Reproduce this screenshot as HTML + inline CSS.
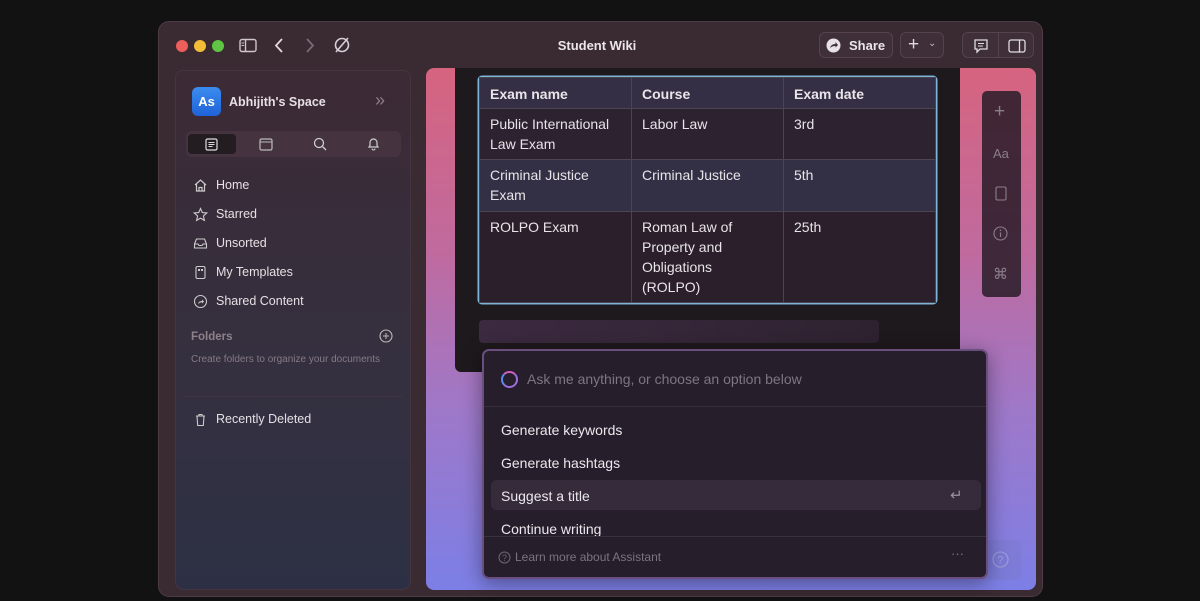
<!DOCTYPE html>
<html><head><meta charset="utf-8"><style>
*{box-sizing:border-box;margin:0;padding:0}
body{width:1200px;height:601px;background:#121212;font-family:"Liberation Sans",sans-serif;position:relative;overflow:hidden;color:#e8e2e6}
.win{position:absolute;left:158px;top:21px;width:885px;height:576px;border-radius:11px;background:#3a2a32;border:1px solid #4d3b45}
.abs{position:absolute}
.dot{position:absolute;top:18px;width:12px;height:12px;border-radius:50%}
.side{position:absolute;left:175px;top:70px;width:236px;height:520px;border-radius:8px;background:linear-gradient(180deg,#3c2a35 0%,#343040 60%,#2d3045 100%);border:1px solid #45353f}
.nav{position:absolute;left:193px;font-size:12.5px;color:#e6e0e4}
.nav span{position:absolute;left:23px;top:0;white-space:nowrap}
.content{position:absolute;left:426px;top:68px;width:610px;height:522px;border-radius:8px;background:linear-gradient(180deg,#d6647f 0%,#c06a9e 35%,#9f78c8 65%,#7c7fe6 100%)}
.doc{position:absolute;left:455px;top:68px;width:505px;height:304px;background:#1e191d;border-radius:0 0 6px 6px}
table{position:absolute;left:479px;top:77px;width:457px;border-collapse:collapse;font-size:14px;color:#e8e4e8;box-shadow:0 0 0 1.5px #7eb4d6;border-radius:3px}
td{border:1px solid #4a4550;vertical-align:top;padding:6px 10px 0 10px;line-height:20px;width:152px}
tr.h td{font-weight:bold;height:31px;background:#352f45;padding-top:6px}
tr.a td{background:#2c2230;height:51px;padding-top:5px}
tr.b td{background:#333046;height:52px;padding-top:5px}
tr.c td{background:#2a1f2b;height:91px;padding-top:5px}
.pop{position:absolute;left:482px;top:349px;width:506px;height:230px;border-radius:7px;background:#261e2a;border:2px solid #6a4e80;box-shadow:0 4px 20px rgba(0,0,0,.4)}
.opt{position:absolute;left:17px;font-size:14px;color:#ece8ee}
.btn{position:absolute;border:1px solid #54434d;border-radius:6px;background:#3f2f39}
</style></head><body>
<div class="win">
<div class="dot" style="left:17px;background:#ed5f5a"></div>
<div class="dot" style="left:35px;background:#f4bd38"></div>
<div class="dot" style="left:53px;background:#5fc443"></div>
<svg class="abs" style="left:80px;top:16px" width="18" height="15" viewBox="0 0 18 15"><rect x="1" y="1.5" width="16" height="12" rx="2" fill="none" stroke="#cfc6cc" stroke-width="1.4"/><line x1="6.5" y1="1.5" x2="6.5" y2="13.5" stroke="#cfc6cc" stroke-width="1.4"/><line x1="2.5" y1="5" x2="5" y2="5" stroke="#cfc6cc"/><line x1="2.5" y1="7.5" x2="5" y2="7.5" stroke="#cfc6cc"/></svg>
<svg class="abs" style="left:115px;top:16px" width="10" height="15"><path d="M8 1L2 7.5L8 14" fill="none" stroke="#e0d8de" stroke-width="1.8"/></svg>
<svg class="abs" style="left:146px;top:16px" width="10" height="15"><path d="M2 1L8 7.5L2 14" fill="none" stroke="#7a6c74" stroke-width="1.8"/></svg>
<svg class="abs" style="left:174px;top:14px" width="18" height="18"><circle cx="9" cy="9" r="6.5" fill="none" stroke="#d8d0d6" stroke-width="1.6"/><line x1="3" y1="16" x2="15" y2="2" stroke="#d8d0d6" stroke-width="1.6"/></svg>
<div class="abs" style="left:0;width:876px;top:16px;text-align:center;font-weight:bold;font-size:13px;color:#ece6ea">Student Wiki</div>
<div class="btn" style="left:660px;top:10px;width:74px;height:26px"><svg class="abs" style="left:6px;top:5px" width="15" height="15"><circle cx="7.5" cy="7.5" r="7" fill="#e8e2e6"/><path d="M4 10Q5 6 9.5 6L9.5 4L12 7L9.5 9.5L9.5 8Q6 8 4 10Z" fill="#3f2f39"/></svg><span class="abs" style="left:29px;top:5px;font-size:13px;font-weight:bold;color:#ece6ea">Share</span></div>
<div class="btn" style="left:741px;top:10px;width:44px;height:26px"><span class="abs" style="left:7px;top:1px;font-size:19px;color:#e0d8de">+</span><span class="abs" style="left:27px;top:5px;font-size:10px;color:#bbb">⌄</span></div>
<div class="btn" style="left:803px;top:10px;width:72px;height:26px"><div class="abs" style="left:35px;top:0;width:1px;height:24px;background:#54434d"></div>
<svg class="abs" style="left:10px;top:5px" width="16" height="16"><path d="M2 2H14V11H7L4 14V11H2Z" fill="none" stroke="#ddd" stroke-width="1.3"/><line x1="5" y1="5.5" x2="11" y2="5.5" stroke="#ddd"/><line x1="5" y1="8" x2="10" y2="8" stroke="#ddd"/></svg>
<svg class="abs" style="left:45px;top:6px" width="18" height="14"><rect x="1" y="1" width="16" height="12" rx="2" fill="none" stroke="#ddd" stroke-width="1.3"/><line x1="11.5" y1="1" x2="11.5" y2="13" stroke="#ddd" stroke-width="1.3"/></svg></div>
</div>

<div class="side"></div>
<div class="abs" style="left:192px;top:87px;width:29px;height:29px;border-radius:6px;background:linear-gradient(#3b8cf0,#1f63d8);color:#fff;font-weight:bold;font-size:13px;text-align:center;line-height:29px">As</div>
<div class="abs" style="left:229px;top:95px;font-size:12.5px;font-weight:bold;color:#e6e0e4">Abhijith's Space</div>
<div class="abs" style="left:375px;top:90px;font-size:18px;color:#8a7d86">»</div>
<div class="abs" style="left:186px;top:131px;width:215px;height:26px;border-radius:6px;background:#45343f"></div>
<div class="abs" style="left:188px;top:134px;width:48px;height:20px;border-radius:4px;background:#231c21"></div>
<svg class="abs" style="left:205px;top:138px" width="13" height="13"><rect x="1" y="1" width="11" height="11" rx="1.5" fill="none" stroke="#ddd" stroke-width="1.2"/><line x1="3.5" y1="4.5" x2="9.5" y2="4.5" stroke="#ddd"/><line x1="3.5" y1="6.5" x2="9.5" y2="6.5" stroke="#ddd"/><line x1="3.5" y1="8.5" x2="7.5" y2="8.5" stroke="#ddd"/></svg>
<svg class="abs" style="left:259px;top:138px" width="14" height="13"><rect x="1" y="1" width="12" height="11" rx="1.5" fill="none" stroke="#bbb" stroke-width="1.2"/><line x1="1" y1="4" x2="13" y2="4" stroke="#bbb"/></svg>
<svg class="abs" style="left:313px;top:137px" width="14" height="14"><circle cx="6" cy="6" r="4.5" fill="none" stroke="#ccc" stroke-width="1.3"/><line x1="9.5" y1="9.5" x2="13" y2="13" stroke="#ccc" stroke-width="1.3"/></svg>
<svg class="abs" style="left:367px;top:137px" width="13" height="14"><path d="M2 10H11L10 8.5V5.5A3.5 3.5 0 0 0 3 5.5V8.5Z" fill="none" stroke="#ccc" stroke-width="1.2"/><path d="M5 11.5A1.5 1.5 0 0 0 8 11.5" fill="none" stroke="#ccc"/></svg>
<div class="nav" style="top:178px"><svg width="15" height="14"><path d="M2 7L7.5 2L13 7M3.5 6V13H11.5V6M6 13V9.5H9V13" fill="none" stroke="#ccc" stroke-width="1.2"/></svg><span>Home</span></div>
<div class="nav" style="top:207px"><svg width="15" height="15"><path d="M7.5 1.5L9.3 5.6L13.8 6L10.4 9L11.4 13.4L7.5 11.1L3.6 13.4L4.6 9L1.2 6L5.7 5.6Z" fill="none" stroke="#ccc" stroke-width="1.1"/></svg><span>Starred</span></div>
<div class="nav" style="top:236px"><svg width="15" height="14"><path d="M1.5 8L3.5 3H11.5L13.5 8V12H1.5Z M1.5 8H5L6 9.5H9L10 8H13.5" fill="none" stroke="#ccc" stroke-width="1.1"/></svg><span>Unsorted</span></div>
<div class="nav" style="top:265px"><svg width="15" height="15"><rect x="3" y="1.5" width="9" height="12" rx="1.5" fill="none" stroke="#ccc" stroke-width="1.1"/><rect x="5" y="4" width="2" height="2" fill="#ccc"/><rect x="8" y="4" width="2" height="2" fill="#ccc"/></svg><span>My Templates</span></div>
<div class="nav" style="top:294px"><svg width="15" height="15"><circle cx="7.5" cy="7.5" r="6" fill="none" stroke="#ccc" stroke-width="1.1"/><path d="M5 10Q5.5 7 9 7V5.5L11 7.5L9 9.5V8.3Q7 8.3 5 10Z" fill="#ccc"/></svg><span>Shared Content</span></div>
<div class="abs" style="left:191px;top:331px;font-size:11.5px;font-weight:bold;color:#8e828a">Folders</div>
<svg class="abs" style="left:379px;top:329px" width="14" height="14"><circle cx="7" cy="7" r="6" fill="none" stroke="#bbb" stroke-width="1.1"/><line x1="7" y1="4" x2="7" y2="10" stroke="#bbb"/><line x1="4" y1="7" x2="10" y2="7" stroke="#bbb"/></svg>
<div class="abs" style="left:191px;top:354px;font-size:10px;color:#857a84">Create folders to organize your documents</div>
<div class="abs" style="left:184px;top:396px;width:218px;height:1px;background:#3f3544"></div>
<div class="nav" style="top:412px"><svg width="15" height="15"><path d="M3 4H12M6 4V2.5H9V4M4 4L4.7 13.5H10.3L11 4" fill="none" stroke="#ccc" stroke-width="1.1"/></svg><span>Recently Deleted</span></div>

<div class="content"></div>
<div class="doc"></div>
<table>
<tr class="h"><td>Exam name</td><td>Course</td><td>Exam date</td></tr>
<tr class="a"><td>Public International Law Exam</td><td>Labor Law</td><td>3rd</td></tr>
<tr class="b"><td>Criminal Justice Exam</td><td>Criminal Justice</td><td>5th</td></tr>
<tr class="c"><td>ROLPO Exam</td><td>Roman Law of Property and Obligations (ROLPO)</td><td>25th</td></tr>
</table>
<div class="abs" style="left:479px;top:320px;width:400px;height:23px;border-radius:4px;background:linear-gradient(90deg,#3c2a40,#2e2230)"></div>
<div class="abs" style="left:982px;top:91px;width:39px;height:206px;border-radius:5px;background:rgba(40,28,40,.85)"></div>
<div class="abs" style="left:994px;top:101px;font-size:19px;color:#8a7f88">+</div>
<div class="abs" style="left:993px;top:146px;font-size:13px;color:#8a7f88">Aa</div>
<svg class="abs" style="left:995px;top:186px" width="12" height="15"><rect x="1" y="1" width="10" height="13" rx="1.5" fill="none" stroke="#8a7f88" stroke-width="1.1"/></svg>
<svg class="abs" style="left:993px;top:226px" width="15" height="15"><circle cx="7.5" cy="7.5" r="6.5" fill="none" stroke="#8a7f88" stroke-width="1.1"/><line x1="7.5" y1="6.5" x2="7.5" y2="11" stroke="#8a7f88" stroke-width="1.2"/><circle cx="7.5" cy="4.3" r=".8" fill="#8a7f88"/></svg>
<div class="abs" style="left:993px;top:265px;font-size:15px;color:#8a7f88">⌘</div>
<div class="abs" style="left:980px;top:540px;width:41px;height:40px;border-radius:5px;background:rgba(120,120,200,.4)"></div>
<svg class="abs" style="left:992px;top:551px" width="17" height="17"><circle cx="8.5" cy="8.5" r="7.5" fill="none" stroke="#9aa0dc" stroke-width="1.1"/><text x="5.3" y="12.5" font-size="11" fill="#9aa0dc" font-family="Liberation Sans">?</text></svg>

<div class="pop">
<div class="abs" style="left:17px;top:20px;width:17px;height:17px;border-radius:50%;border:2.5px solid #9a6ee0;border-left-color:#5a8af0;border-top-color:#d060c0"></div>
<div class="abs" style="left:43px;top:20px;font-size:14px;color:#7f7584">Ask me anything, or choose an option below</div>
<div class="abs" style="left:0;top:55px;width:502px;height:1px;background:#362c3a"></div>
<div class="opt" style="top:71px">Generate keywords</div>
<div class="opt" style="top:104px">Generate hashtags</div>
<div class="abs" style="left:7px;top:129px;width:490px;height:30px;border-radius:5px;background:#352b3a"></div>
<div class="opt" style="top:137px">Suggest a title</div>
<div class="abs" style="left:466px;top:135px;font-size:15px;color:#9a909e">↵</div>
<div class="opt" style="top:170px">Continue writing</div>
<div class="abs" style="left:0;top:185px;width:502px;height:41px;background:#261e2a;border-top:1px solid #3a3040;border-radius:0 0 6px 6px"></div>
<svg class="abs" style="left:14px;top:200px" width="13" height="13"><circle cx="6.5" cy="6.5" r="5.5" fill="none" stroke="#6f6676"/><text x="4" y="10" font-size="9" fill="#6f6676" font-family="Liberation Sans">?</text></svg>
<div class="abs" style="left:31px;top:199px;font-size:12px;color:#7d7384">Learn more about Assistant</div>
<div class="abs" style="left:467px;top:195px;font-size:13px;color:#7d7384">···</div>
</div>
</body></html>
